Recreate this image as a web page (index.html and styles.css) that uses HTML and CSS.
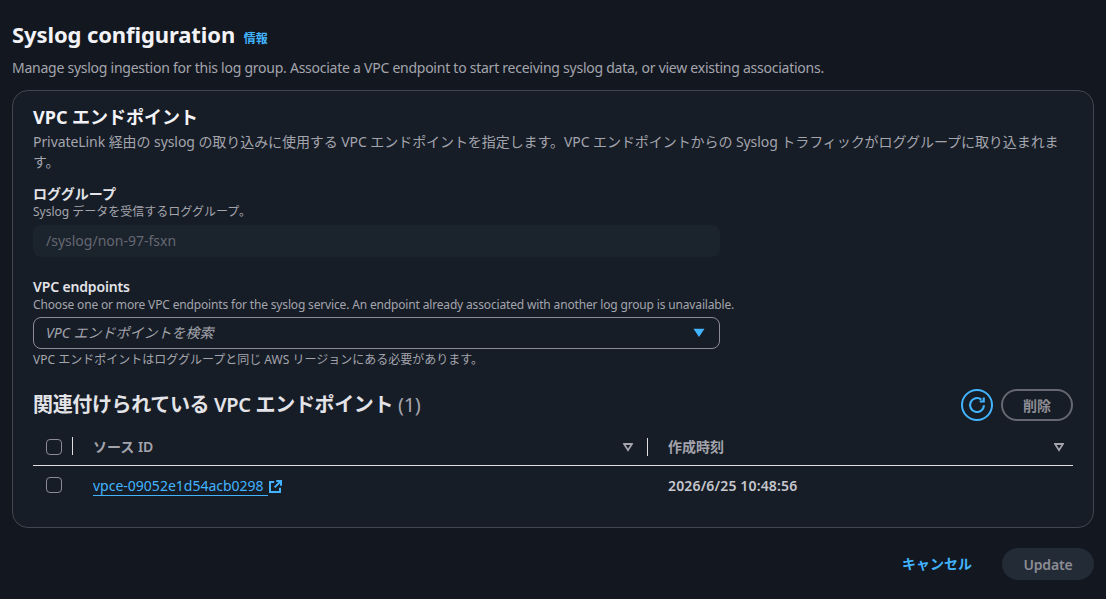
FILE: index.html
```html
<!DOCTYPE html>
<html lang="ja">
<head>
<meta charset="utf-8">
<title>Syslog configuration</title>
<link rel="stylesheet" href="styles.css">
</head>
<body>
<main class="page">
  <header class="page-head">
    <h1 class="page-title">Syslog configuration <a class="info">情報</a></h1>
    <p class="page-desc">Manage syslog ingestion for this log group. Associate a VPC endpoint to start receiving syslog data, or view existing associations.</p>
  </header>
  <section class="card">
    <h2 class="card-title">VPC エンドポイント</h2>
    <p class="card-desc">PrivateLink 経由の syslog の取り込みに使用する VPC エンドポイントを指定します。VPC エンドポイントからの Syslog トラフィックがロググループに取り込まれます。</p>

    <div class="field field-group">
      <div class="label">ロググループ</div>
      <div class="hint">Syslog データを受信するロググループ。</div>
      <div class="input disabled">/syslog/non-97-fsxn</div>
    </div>

    <div class="field field-endpoints">
      <div class="label label-latin">VPC endpoints</div>
      <div class="hint hint-latin">Choose one or more VPC endpoints for the syslog service. An endpoint already associated with another log group is unavailable.</div>
      <div class="input select">
        <span class="placeholder">VPC エンドポイントを検索</span>
        <svg class="caret" width="12" height="10" viewBox="0 0 12 10"><path d="M0.5 0.8h11L6 9z" fill="#42b4ff"/></svg>
      </div>
      <div class="hint hint-after">VPC エンドポイントはロググループと同じ AWS リージョンにある必要があります。</div>
    </div>

    <div class="table-head">
      <h2 class="table-title">関連付けられている VPC エンドポイント <span class="count">(1)</span></h2>
      <div class="actions">
        <button class="icon-btn" aria-label="更新">
          <svg width="18" height="18" viewBox="0 0 16 16" fill="none" stroke="#42b4ff" stroke-width="1.9"><path d="M14.2 8.2A6.2 6.2 0 1 1 11.9 3.2"/><path d="M14 1.3v3.6h-3.6" stroke-linejoin="miter"/></svg>
        </button>
        <button class="pill-btn">削除</button>
      </div>
    </div>

    <table class="table">
      <thead>
        <tr>
          <th class="col-check"><span class="check"></span><span class="divider"></span></th>
          <th class="col-id"><div class="th-inner"><span>ソース ID</span><svg class="sort" width="10" height="10" viewBox="0 0 10 10"><path d="M1 2h8L5 8.2z" fill="none" stroke="#a4a4ad" stroke-width="1.8"/></svg><span class="divider divider-end"></span></div></th>
          <th class="col-time"><div class="th-inner"><span>作成時刻</span><svg class="sort" width="10" height="10" viewBox="0 0 10 10"><path d="M1 2h8L5 8.2z" fill="none" stroke="#a4a4ad" stroke-width="1.8"/></svg></div></th>
        </tr>
      </thead>
      <tbody>
        <tr>
          <td class="col-check"><span class="check"></span></td>
          <td class="col-id"><div class="link-wrap"><a class="link">vpce-09052e1d54acb0298</a><svg class="ext" width="13" height="13" viewBox="0 0 13 13" fill="none" stroke="#42b4ff" stroke-width="2"><path d="M5.2 2H1v10h10V7.8"/><path d="M7.2 1h4.8v4.8M11.8 1.2L5.6 7.4"/></svg></div></td>
          <td class="col-time cell-time">2026/6/25 10:48:56</td>
        </tr>
      </tbody>
    </table>
  </section>
  <footer class="page-foot">
    <a class="cancel">キャンセル</a>
    <button class="primary">Update</button>
  </footer>
</main>
</body>
</html>
```
FILE: styles.css
```css
* { box-sizing: border-box; }
html, body { margin: 0; padding: 0; }
body {
  background: #131820;
  color: #c6c6cd;
  font-family: "Noto Sans", "Noto Sans CJK JP", sans-serif;
  font-size: 14px;
  line-height: 20px;
  width: 1106px;
  height: 599px;
  overflow: hidden;
}
.page { padding: 20px 12px 0; }
.page-head { height: 70px; }
.page-title {
  margin: 0;
  font-size: 22px;
  line-height: 28px;
  font-weight: 700;
  color: #f3f3f7;
  letter-spacing: -0.1px;
}
.info { color: #42b4ff; font-size: 12px; font-weight: 600; margin-left: 3px; letter-spacing: 0; }
.page-desc { margin: 5px 0 0; color: #a4a4ad; white-space: nowrap; letter-spacing: -0.25px; }
.card {
  height: 438px;
  background: #161d26;
  border: 1px solid #424650;
  border-radius: 16px;
  padding: 14px 20px 0;
}
.card-title {
  margin: 0;
  font-size: 18px;
  line-height: 24px;
  font-weight: 700;
  color: #f3f3f7;
}
.card-desc { margin: 3px 0 0; color: #a4a4ad; letter-spacing: -0.07px; }
.field-group { margin-top: 12px; }
.field-endpoints { margin-top: 20px; }
.label { font-weight: 600; color: #e3e3e8; line-height: 20px; }
.label-latin { letter-spacing: -0.15px; }
.hint { font-size: 12px; line-height: 16px; color: #a4a4ad; white-space: nowrap; }
.hint-latin { letter-spacing: -0.16px; }
.hint-after { margin-top: 3px; }
.input {
  width: 687px;
  height: 32px;
  margin-top: 5px;
  border-radius: 8px;
  padding: 0 13px;
  display: flex;
  align-items: center;
  justify-content: space-between;
}
.disabled { background: #1b232d; color: #656871; }
.select { border: 1px solid #8c8c94; height: 32px; padding: 0 14px 0 12px; margin-top: 4px; }
.placeholder { font-style: italic; color: #a4a4ad; }
.table-head {
  margin-top: 21px;
  height: 32px;
  display: flex;
  align-items: center;
  justify-content: space-between;
}
.table-title { margin: 0; font-size: 20px; line-height: 28px; font-weight: 600; color: #e3e3e8; letter-spacing: -0.35px; }
.count { font-weight: 400; color: #a4a4ad; }
.actions { display: flex; gap: 8px; align-items: center; }
.icon-btn {
  width: 32px;
  height: 32px;
  border: 2px solid #42b4ff;
  border-radius: 50%;
  background: none;
  padding: 0;
  display: flex;
  align-items: center;
  justify-content: center;
}
.pill-btn {
  width: 72px;
  height: 32px;
  border: 2px solid #656871;
  border-radius: 16px;
  background: none;
  color: #8c8c94;
  font: 600 14px "Noto Sans", "Noto Sans CJK JP", sans-serif;
  padding: 0;
}
.table { width: 100%; border-collapse: collapse; margin-top: 8px; table-layout: fixed; }
.table th {
  height: 36px;
  padding: 0;
  text-align: left;
  color: #a4a4ad;
  font-weight: 600;
  border-bottom: 1px solid #dedee3;
  position: relative;
}
.table td { height: 40px; padding: 0; color: #c6c6cd; }
.col-check { width: 40px; }
.col-id { width: 575px; }
.check {
  display: inline-block;
  width: 16px;
  height: 16px;
  margin: 0 0 2px 13px;
  border: 1px solid #8c8c94;
  border-radius: 4px;
  vertical-align: middle;
}
.divider {
  position: absolute;
  top: 8px;
  width: 1px;
  height: 18px;
  background: #dedee3;
  left: 39px;
}
.th-inner { display: flex; justify-content: space-between; align-items: center; padding: 0 9px 0 20px; height: 34px; position: relative; }
.col-id .th-inner { padding-right: 15px; }
.divider-end { left: auto; right: 0; }
.table .cell-time { padding: 2px 0 0 20px; font-weight: 600; letter-spacing: 0.15px; }
.link-wrap { display: flex; align-items: center; margin: 2px 0 0 20px; }
.link { color: #42b4ff; text-decoration: none; font-weight: 400; border-bottom: 1px solid #42b4ff; line-height: 18px; white-space: nowrap; padding-right: 4px; }
.ext { margin-left: 1px; }
.page-foot {
  margin-top: 20px;
  display: flex;
  justify-content: flex-end;
  align-items: center;
  gap: 30px;
}
.cancel { color: #42b4ff; font-weight: 600; }
.primary {
  width: 92px;
  height: 32px;
  border: none;
  border-radius: 16px;
  background: #232b37;
  color: #8c8c94;
  font: 600 14px "Noto Sans", "Noto Sans CJK JP", sans-serif;
  letter-spacing: -0.15px;
  padding: 0;
}
```
